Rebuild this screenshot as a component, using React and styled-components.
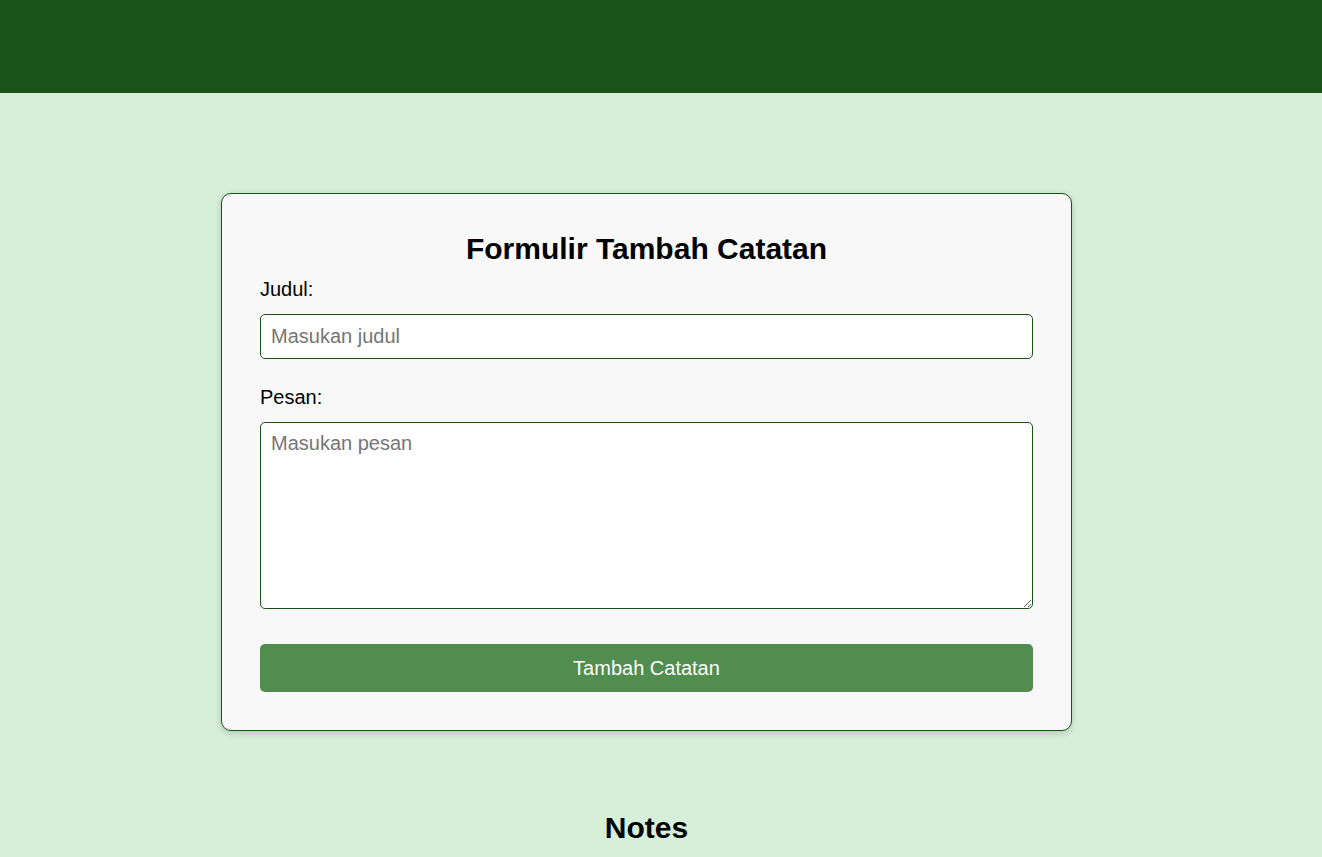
import React from "react";
import styled, { createGlobalStyle } from "styled-components";

const GlobalStyle = createGlobalStyle`
  html, body {
    margin: 0;
    padding: 0;
  }
  body {
    background: #d6efd8;
    font-family: "Liberation Sans", Arial, sans-serif;
    color: #000;
  }
`;

const Header = styled.header`
  height: 93px;
  background: #1a5319;
`;

const Main = styled.main`
  padding-right: 29px;
`;

const Card = styled.form`
  width: 773px;
  margin: 100px auto 80px;
  padding: 38px 38px 38px;
  background: #f8f8f8;
  border: 1px solid #1a5319;
  border-radius: 10px;
  box-shadow: 0 2px 6px rgba(0, 0, 0, 0.18);
`;

const Title = styled.h2`
  margin: 0 0 12px;
  font-size: 30px;
  font-weight: 700;
  text-align: center;
`;

const Label = styled.label`
  display: block;
  font-size: 20px;
  margin-bottom: 13px;
`;

const Field = styled.div`
  margin-bottom: ${(p) => p.$gap || 27}px;
`;

const Input = styled.input`
  display: block;
  box-sizing: border-box;
  width: 100%;
  height: 45px;
  padding: 0 10px;
  font-family: inherit;
  font-size: 20px;
  background: #fff;
  border: 1px solid #1a5319;
  border-radius: 5px;
  outline: none;
  &::placeholder {
    color: #757575;
  }
`;

const TextArea = styled.textarea`
  display: block;
  box-sizing: border-box;
  width: 100%;
  height: 187px;
  padding: 9px 10px;
  font-family: inherit;
  font-size: 20px;
  background: #fff;
  border: 1px solid #1a5319;
  border-radius: 5px;
  outline: none;
  resize: vertical;
  &::placeholder {
    color: #757575;
  }
`;

const Button = styled.button`
  display: block;
  width: 100%;
  height: 48px;
  font-family: inherit;
  font-size: 20px;
  color: #fff;
  background: #508d4e;
  border: none;
  border-radius: 5px;
  cursor: pointer;
`;

const NotesTitle = styled.h2`
  margin: 0;
  font-size: 30px;
  font-weight: 700;
  text-align: center;
`;

export default function App() {
  return (
    <>
      <GlobalStyle />
      <Header />
      <Main>
        <Card onSubmit={(e) => e.preventDefault()}>
          <Title>Formulir Tambah Catatan</Title>
          <Field>
            <Label htmlFor="judul">Judul:</Label>
            <Input id="judul" type="text" placeholder="Masukan judul" />
          </Field>
          <Field $gap={35}>
            <Label htmlFor="pesan">Pesan:</Label>
            <TextArea id="pesan" placeholder="Masukan pesan" />
          </Field>
          <Button type="submit">Tambah Catatan</Button>
        </Card>
        <NotesTitle>Notes</NotesTitle>
      </Main>
    </>
  );
}
